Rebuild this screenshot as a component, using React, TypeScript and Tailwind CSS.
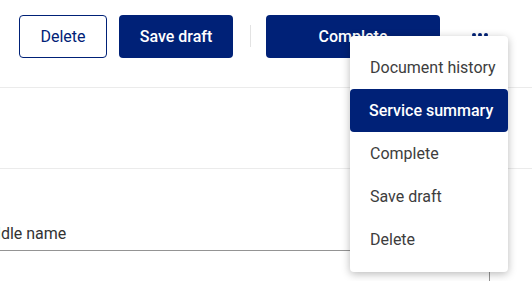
import React from "react";

const NAVY = "bg-[#002177]";

export default function App() {
  return (
    <div className="relative w-[532px] h-[281px] overflow-hidden bg-white font-['Roboto',_'Liberation_Sans',_sans-serif]">
      {/* Top action bar */}
      <div className="h-[88px] border-b border-[#ebebeb] flex items-start pt-[15px] pl-[19px]">
        <button className="h-[43px] w-[88px] rounded-[4px] border border-[#002177] text-[#002177] text-[16px] font-normal flex items-center justify-center">
          Delete
        </button>
        <button className={`ml-[12px] h-[43px] w-[114px] rounded-[4px] ${NAVY} text-white text-[16px] font-medium flex items-center justify-center`}>
          Save draft
        </button>
        <div className="ml-[17px] mt-[10px] w-px h-[22px] bg-[#e3e3e3]" />
        <button className={`ml-[15px] h-[43px] w-[174px] rounded-[4px] ${NAVY} text-white text-[16px] font-medium flex items-center justify-center`}>
          Complete
        </button>
        <div className="ml-[32px] mt-[18px] flex gap-[2px]">
          <span className="block w-[4px] h-[4px] rounded-full bg-[#002177]" />
          <span className="block w-[4px] h-[4px] rounded-full bg-[#002177]" />
          <span className="block w-[4px] h-[4px] rounded-full bg-[#002177]" />
        </div>
      </div>

      {/* Empty section */}
      <div className="h-[81px] border-b border-[#ebebeb]" />

      {/* Field */}
      <div className="flex">
        <div className="w-[490px] h-[82px] border-b border-[#949494] flex items-end pb-[6px] overflow-hidden">
          <span className="-ml-[26px] text-[16px] leading-[20px] text-[#333333] whitespace-nowrap">Middle name</span>
        </div>
      </div>
      <div className="flex">
        <div className="w-[490px] h-[40px] border-r border-[#949494]" />
      </div>

      {/* Dropdown menu */}
      <div className="absolute left-[350px] top-[36px] w-[158px] rounded-[4px] bg-white shadow-[0_2px_8px_rgba(0,0,0,0.28)] pt-[10px] pb-[11px]">
        <div className="h-[43px] flex items-center pl-[20px] text-[16px] text-[#3d3d3d] whitespace-nowrap">Document history</div>
        <div className={`h-[43px] flex items-center pl-[19px] rounded-[4px] ${NAVY} text-white text-[16px] font-medium whitespace-nowrap`}>Service summary</div>
        <div className="h-[43px] flex items-center pl-[20px] text-[16px] text-[#3d3d3d]">Complete</div>
        <div className="h-[43px] flex items-center pl-[20px] text-[16px] text-[#3d3d3d]">Save draft</div>
        <div className="h-[43px] flex items-center pl-[20px] text-[16px] text-[#3d3d3d]">Delete</div>
      </div>
    </div>
  );
}
